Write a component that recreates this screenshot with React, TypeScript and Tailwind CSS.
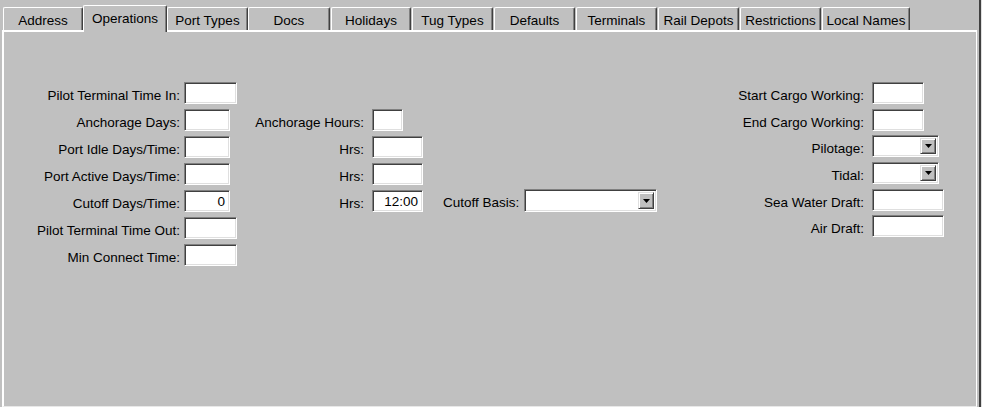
import React from "react";

const sunken =
  "bg-white border border-t-[#808080] border-l-[#808080] border-r-white border-b-white shadow-[inset_1px_1px_0_#404040,inset_-1px_-1px_0_#dfdfdf]";

function Field({ w, value }: { w: string; value?: string }) {
  return (
    <div className={`${w} h-[22px] ${sunken} flex items-center justify-end pr-[4px] leading-[15px] text-black`}>
      {value}
    </div>
  );
}

function Combo({ w, h = "h-[22px]" }: { w: string; h?: string }) {
  return (
    <div className={`${w} ${h} ${sunken} flex justify-end p-[2px]`}>
      <div className="w-[16px] h-full bg-[#c0c0c0] border border-t-[#dfdfdf] border-l-[#dfdfdf] border-r-[#404040] border-b-[#404040] shadow-[inset_1px_1px_0_#ffffff,inset_-1px_-1px_0_#808080] flex items-center justify-center">
        <svg width="7" height="4" viewBox="0 0 7 4">
          <polygon points="0,0 7,0 3.5,4" fill="#000" />
        </svg>
      </div>
    </div>
  );
}

const tabs: { label: string; w: string; mr: string; sel?: boolean }[] = [
  { label: "Address", w: "w-[80px]", mr: "mr-0" },
  { label: "Operations", w: "w-[84px]", mr: "mr-0", sel: true },
  { label: "Port Types", w: "w-[81px]", mr: "mr-0" },
  { label: "Docs", w: "w-[82px]", mr: "mr-[1px]" },
  { label: "Holidays", w: "w-[80px]", mr: "mr-[1px]" },
  { label: "Tug Types", w: "w-[81px]", mr: "mr-[1px]" },
  { label: "Defaults", w: "w-[81px]", mr: "mr-[1px]" },
  { label: "Terminals", w: "w-[81px]", mr: "mr-[1px]" },
  { label: "Rail Depots", w: "w-[81px]", mr: "mr-[1px]" },
  { label: "Restrictions", w: "w-[81px]", mr: "mr-[1px]" },
  { label: "Local Names", w: "w-[88px]", mr: "mr-0" },
];

const leftRows: { label: string; w: string; value?: string }[] = [
  { label: "Pilot Terminal Time In:", w: "w-[53px]" },
  { label: "Anchorage Days:", w: "w-[46px]" },
  { label: "Port Idle Days/Time:", w: "w-[46px]" },
  { label: "Port Active Days/Time:", w: "w-[46px]" },
  { label: "Cutoff Days/Time:", w: "w-[46px]", value: "0" },
  { label: "Pilot Terminal Time Out:", w: "w-[53px]" },
  { label: "Min Connect Time:", w: "w-[53px]" },
];

const midRows: { label: string; w: string; value?: string }[] = [
  { label: "Anchorage Hours:", w: "w-[31px]" },
  { label: "Hrs:", w: "w-[51px]" },
  { label: "Hrs:", w: "w-[51px]" },
  { label: "Hrs:", w: "w-[51px]", value: "12:00" },
];

const rightRows: { label: string; w: string; mt: string; combo?: boolean }[] = [
  { label: "Start Cargo Working:", w: "w-[52px]", mt: "mt-0" },
  { label: "End Cargo Working:", w: "w-[52px]", mt: "mt-[5px]" },
  { label: "Pilotage:", w: "w-[67px]", mt: "mt-[4px]", combo: true },
  { label: "Tidal:", w: "w-[67px]", mt: "mt-[5px]", combo: true },
  { label: "Sea Water Draft:", w: "w-[72px]", mt: "mt-[5px]" },
  { label: "Air Draft:", w: "w-[72px]", mt: "mt-[4px]" },
];

export default function App() {
  return (
    <div className="w-[982px] h-[407px] bg-[#c0c0c0] overflow-hidden flex font-['Liberation_Sans',Arial,sans-serif] text-[13.5px] text-black">
      <div className="w-[979px] h-full flex flex-col">
        {/* tab strip */}
        <div className="h-[30px] flex items-end pl-[3px]">
          {tabs.map((t) =>
            t.sel ? (
              <div
                key={t.label}
                className={`${t.w} ${t.mr} h-[27px] mb-[-2px] relative z-10 bg-[#c0c0c0] border-t border-l border-t-white border-l-white border-r border-r-[#404040] shadow-[inset_-1px_0_0_#808080] rounded-tl-[2px] rounded-tr-[2px] text-center pt-[5px] leading-[15px] whitespace-nowrap`}
              >
                {t.label}
              </div>
            ) : (
              <div
                key={t.label}
                className={`${t.w} ${t.mr} h-[23px] bg-[#c0c0c0] border-t border-l border-t-white border-l-white border-r border-r-[#404040] shadow-[inset_-1px_0_0_#808080] rounded-tl-[2px] rounded-tr-[2px] text-center pt-[5px] leading-[15px] whitespace-nowrap`}
              >
                {t.label}
              </div>
            )
          )}
        </div>
        {/* panel */}
        <div className="ml-[2px] w-[975px] h-[377px] border-t-2 border-l-2 border-r border-b border-t-white border-l-white border-r-white border-b-[#e8e8e8] flex pt-[50px]">
          {/* left column */}
          <div className="flex flex-col gap-[5px]">
            {leftRows.map((r, i) => (
              <div key={i} className="flex gap-[4px] h-[22px]">
                <div className="w-[176px] text-right pt-[6px] leading-[15px] whitespace-nowrap">{r.label}</div>
                <Field w={r.w} value={r.value} />
              </div>
            ))}
          </div>
          {/* middle column */}
          <div className="ml-[3px] mt-[27px] flex flex-col gap-[5px]">
            {midRows.map((r, i) => (
              <div key={i} className="flex gap-[8px] h-[22px]">
                <div className="w-[124px] text-right pt-[6px] leading-[15px] whitespace-nowrap">{r.label}</div>
                <Field w={r.w} value={r.value} />
              </div>
            ))}
          </div>
          {/* cutoff basis */}
          <div className="ml-[20px] mt-[107px] flex gap-[7px] h-[23px] self-start">
            <div className="w-[74px] pt-[6px] leading-[15px] whitespace-nowrap">Cutoff Basis:</div>
            <Combo w="w-[133px]" h="h-[23px]" />
          </div>
          {/* right column */}
          <div className="ml-auto mr-[32px] flex flex-col">
            {rightRows.map((r, i) => (
              <div key={i} className={`flex gap-[8px] h-[22px] ${r.mt}`}>
                <div className="w-[130px] text-right pt-[6px] leading-[15px] whitespace-nowrap">{r.label}</div>
                {r.combo ? <Combo w={r.w} /> : <Field w={r.w} />}
              </div>
            ))}
          </div>
        </div>
      </div>
      <div className="w-[2px] h-full bg-[#404040]" />
      <div className="w-[1px] h-full bg-[#e0e0e0]" />
    </div>
  );
}
